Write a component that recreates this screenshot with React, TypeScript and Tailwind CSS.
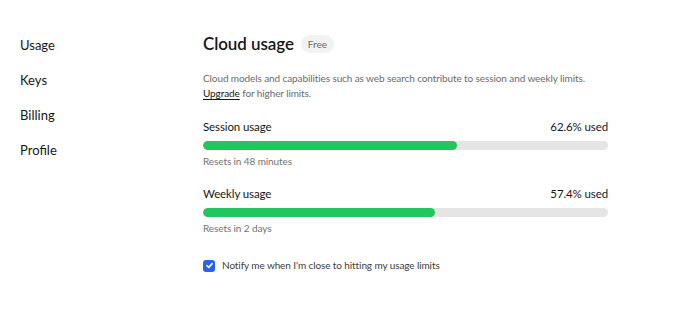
import React from "react";

function Bar({ pct }: { pct: number }) {
  return (
    <div className="h-[9px] w-full rounded-full bg-[#e5e5e5] overflow-hidden">
      <div className="h-full rounded-full bg-[#22c55e]" style={{ width: `${pct}%` }} />
    </div>
  );
}

export default function App() {
  return (
    <div
      className="flex h-[313px] w-[680px] bg-white text-[#171717]"
      style={{ fontFamily: 'Lato, "Liberation Sans", sans-serif' }}
    >
      <nav className="flex w-[203px] shrink-0 flex-col gap-[15px] pl-[20px] pt-[35px] text-[13px] leading-[20px]">
        <div>Usage</div>
        <div>Keys</div>
        <div>Billing</div>
        <div>Profile</div>
      </nav>
      <main className="w-[405px] pt-[31px]">
        <div className="flex items-center gap-[7px]">
          <h1 className="text-[17px] font-semibold leading-[26px] tracking-[-0.005em]">Cloud usage</h1>
          <span className="rounded-full bg-[#f2f2f2] px-[7px] text-[10px] leading-[18px] text-[#6b6b6b]">Free</span>
        </div>
        <p className="mt-[14px] text-[10px] leading-[15px] tracking-[-0.01em] text-[#6b6b6b]">
          Cloud models and capabilities such as web search contribute to session and weekly limits.
          <br />
          <span className="text-[#171717] underline underline-offset-2">Upgrade</span> for higher limits.
        </p>
        <div className="mt-[17px]">
          <div className="flex justify-between text-[11.5px] leading-[18px] tracking-[-0.01em]">
            <span>Session usage</span>
            <span>62.6% used</span>
          </div>
          <div className="mt-[5px]">
            <Bar pct={62.6} />
          </div>
          <div className="mt-[4px] text-[10px] leading-[15px] tracking-[-0.01em] text-[#737373]">Resets in 48 minutes</div>
        </div>
        <div className="mt-[16px]">
          <div className="flex justify-between text-[11.5px] leading-[18px] tracking-[-0.01em]">
            <span>Weekly usage</span>
            <span>57.4% used</span>
          </div>
          <div className="mt-[5px]">
            <Bar pct={57.4} />
          </div>
          <div className="mt-[4px] text-[10px] leading-[15px] tracking-[-0.01em] text-[#737373]">Resets in 2 days</div>
        </div>
        <label className="mt-[22px] flex items-center gap-[7px] text-[10px] leading-[15px] tracking-[-0.01em] text-[#404040]">
          <span className="flex h-[12px] w-[12px] items-center justify-center rounded-[3px] bg-[#2563eb]">
            <svg viewBox="0 0 12 12" className="h-[9px] w-[9px]" fill="none" stroke="white" strokeWidth="2" strokeLinecap="round" strokeLinejoin="round">
              <path d="M2.5 6.2 L5 8.5 L9.5 3.5" />
            </svg>
          </span>
          <span>Notify me when I'm close to hitting my usage limits</span>
        </label>
      </main>
    </div>
  );
}
